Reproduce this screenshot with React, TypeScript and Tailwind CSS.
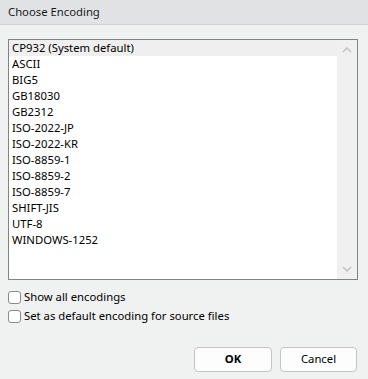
import React, { useState } from 'react';

const encodings = [
  'CP932 (System default)',
  'ASCII',
  'BIG5',
  'GB18030',
  'GB2312',
  'ISO-2022-JP',
  'ISO-2022-KR',
  'ISO-8859-1',
  'ISO-8859-2',
  'ISO-8859-7',
  'SHIFT-JIS',
  'UTF-8',
  'WINDOWS-1252',
];

function Checkbox({ label }: { label: string }) {
  const [checked, setChecked] = useState(false);
  return (
    <label className="flex items-center h-[19px] cursor-default">
      <span
        onClick={() => setChecked(!checked)}
        className="w-[13px] h-[13px] rounded-[3px] border border-[#8a8a8a] bg-white mr-[3px]"
      />
      <span>{label}</span>
    </label>
  );
}

export default function App() {
  const [selected, setSelected] = useState(0);

  return (
    <div
      className="w-[368px] h-[379px] bg-[#f0f1f1] text-[11.3px] text-black flex flex-col"
      style={{ fontFamily: '"Noto Sans", "Liberation Sans", sans-serif' }}
    >
      {/* 标题栏 */}
      <div className="h-[25px] bg-[#e1e2e4] border-b border-[#d0d1d3] flex items-center px-[8px] shrink-0">
        <span className="text-[#1a1a1a]">Choose Encoding</span>
      </div>

      {/* 编码列表 */}
      <div className="mt-[14px] ml-[8px] w-[350px] h-[241px] border border-[#828282] bg-white flex">
        <div className="flex-1 flex flex-col">
          {encodings.map((enc, i) => (
            <div
              key={enc}
              onClick={() => setSelected(i)}
              className={`h-[16px] leading-[16px] pl-[3px] ${
                selected === i ? 'bg-[#efefef]' : ''
              }`}
            >
              {enc}
            </div>
          ))}
        </div>
        {/* 滚动条 */}
        <div className="w-[20px] bg-[#f0f0f0] flex flex-col items-center justify-between py-[7px]">
          <svg width="10" height="6" viewBox="0 0 10 6">
            <path d="M1 5 L5 1 L9 5" fill="none" stroke="#c2c2c2" strokeWidth="1.5" />
          </svg>
          <svg width="10" height="6" viewBox="0 0 10 6">
            <path d="M1 1 L5 5 L9 1" fill="none" stroke="#c2c2c2" strokeWidth="1.5" />
          </svg>
        </div>
      </div>

      {/* 选项 */}
      <div className="mt-[8px] ml-[8px] flex flex-col">
        <Checkbox label="Show all encodings" />
        <Checkbox label="Set as default encoding for source files" />
      </div>

      {/* 按钮 */}
      <div className="mt-auto mb-[7px] mr-[11px] flex justify-end gap-[8px]">
        <button className="w-[78px] h-[25px] rounded-[4px] border border-[#c4c4c4] bg-[#fdfdfd] font-bold">
          OK
        </button>
        <button className="w-[77px] h-[25px] rounded-[4px] border border-[#c4c4c4] bg-[#fdfdfd]">
          Cancel
        </button>
      </div>
    </div>
  );
}
